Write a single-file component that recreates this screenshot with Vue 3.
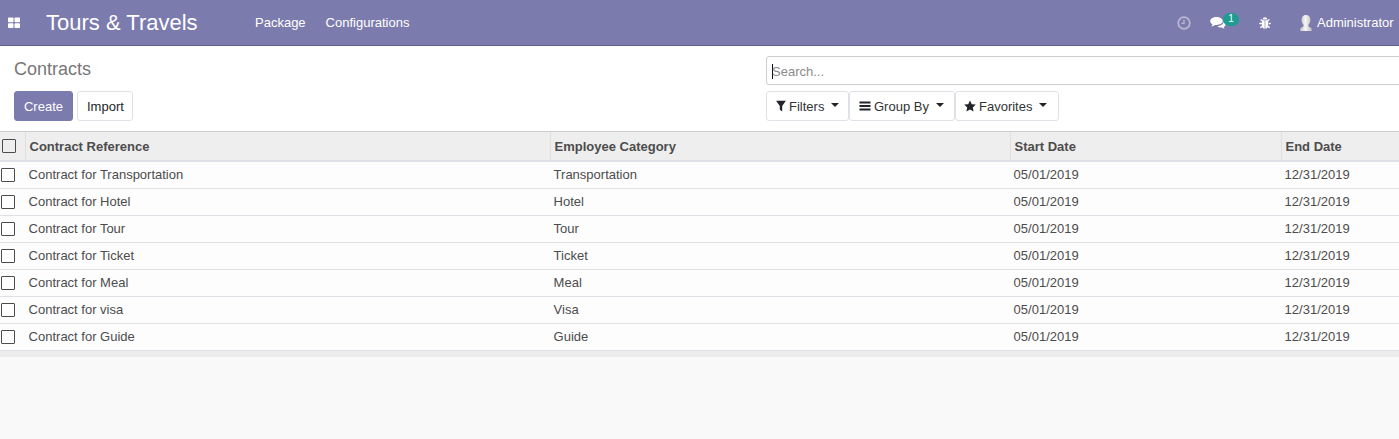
<script setup>
const rows = [
  ['Contract for Transportation', 'Transportation'],
  ['Contract for Hotel', 'Hotel'],
  ['Contract for Tour', 'Tour'],
  ['Contract for Ticket', 'Ticket'],
  ['Contract for Meal', 'Meal'],
  ['Contract for visa', 'Visa'],
  ['Contract for Guide', 'Guide'],
];
</script>

<template>
  <div class="page">
    <header class="navbar">
      <svg class="apps" width="12" height="12" viewBox="0 0 12 12">
        <rect x="0" y="0.5" width="5.5" height="4.8" rx="0.8" />
        <rect x="6.5" y="0.5" width="5.5" height="4.8" rx="0.8" />
        <rect x="0" y="6.2" width="5.5" height="4.8" rx="0.8" />
        <rect x="6.5" y="6.2" width="5.5" height="4.8" rx="0.8" />
      </svg>
      <span class="brand">Tours &amp; Travels</span>
      <nav class="menu">
        <a>Package</a>
        <a>Configurations</a>
      </nav>
      <div class="systray">
        <svg class="clock" width="14" height="14" viewBox="0 0 14 14" fill="none">
          <circle cx="7" cy="7" r="5.8" stroke-width="1.7" />
          <path d="M7 3.6V7.4H4.4" stroke-width="1.3" />
        </svg>
        <div class="chat">
          <svg width="16" height="14" viewBox="0 0 16 14">
            <path d="M6.500 1C3 1 .2 2.800.2 5.100c0 1.300.9 2.500 2.300 3.300-.2.800-.6 1.500-1.100 2 1.300-.2 2.500-.8 3.400-1.500.5.1 1.100.1 1.700.1 3.500 0 6.300-1.800 6.300-3.900S10 1 6.500 1Z" />
            <path d="M13.600 5.600c0 2.500-2.800 4.500-6.200 4.700.9.800 2.200 1.200 3.400 1.200.4 0 .8 0 1.200-.1.600.6 1.600 1.100 2.600 1.300-.4-.4-.7-1-.8-1.700 1-.6 1.700-1.500 1.700-2.500 0-1-.7-2-1.900-2.700Z" />
          </svg>
          <span class="badge">1</span>
        </div>
        <svg class="bug" width="12" height="12" viewBox="0.700 0.700 11.600 11.600">
          <path d="M4.200 3.100C4.300 1.800 5.300 1 6.500 1s2.200.8 2.300 2.100Z" />
          <path d="M3.500 3.900h2.700V12C4.500 11.800 3.500 10.500 3.500 8.800ZM6.800 3.900h2.700v4.900c0 1.700-1 3-2.700 3.200Z" />
          <path d="M2.300 3 3.500 4.300M10.700 3 9.500 4.300M1 7h2.500M10 7h2M2 11.200l1.700-1.500M11 11.200 9.300 9.700" />
        </svg>
        <div class="user">
          <svg width="12" height="16" viewBox="0 0 12 16">
            <defs>
              <linearGradient id="avatarShade" x1="0" y1="0" x2="1" y2="0">
                <stop offset="0" stop-color="#c4c4c4" />
                <stop offset="0.45" stop-color="#f6f6f6" />
                <stop offset="1" stop-color="#bdbdbd" />
              </linearGradient>
            </defs>
            <path fill="url(#avatarShade)" d="M6 0C3.300 0 1.600 1.900 1.600 4.800c0 2.200.9 4 1.900 5v1.600C2.300 12 .3 12.500.3 14v2h11.400v-2c0-1.500-2-2-3.200-2.600V9.800c1-1 1.900-2.800 1.900-5C10.400 1.900 8.700 0 6 0Z" />
          </svg>
          <span>Administrator</span>
          <i class="status"></i>
        </div>
      </div>
    </header>

    <section class="control-panel">
      <div class="left">
        <h1>Contracts</h1>
        <div class="buttons">
          <button class="btn primary">Create</button>
          <button class="btn import">Import</button>
        </div>
      </div>
      <div class="right">
        <div class="search">
          <i class="cursor"></i>
          <span>Search...</span>
        </div>
        <div class="filters">
          <button class="btn filter w-filters">
            <svg width="10" height="12" viewBox="0 0 10 12"><path d="M.1.800h9.800L6.200 6v5.600L3.800 9.800V6Z" /></svg>
            Filters
            <i class="caret"></i>
          </button>
          <button class="btn filter w-group">
            <svg width="12" height="12" viewBox="0 0 12 12"><path d="M.5 1.500h11v2H.5ZM.5 5h11v2H.5ZM.5 8.500h11v2H.5Z" /></svg>
            Group By
            <i class="caret"></i>
          </button>
          <button class="btn filter w-fav">
            <svg width="12" height="12" viewBox="0 0 13 12"><path d="M6.500 0 8.400 4l4.400.5-3.300 3 .9 4.400-3.900-2.200-3.900 2.200.9-4.400-3.300-3L4.600 4Z" /></svg>
            Favorites
            <i class="caret"></i>
          </button>
        </div>
      </div>
    </section>

    <table class="list">
      <colgroup>
        <col class="c0" />
        <col class="c1" />
        <col class="c2" />
        <col class="c3" />
        <col class="c4" />
      </colgroup>
      <thead>
        <tr>
          <th class="sel"><i class="check head"></i></th>
          <th>Contract Reference</th>
          <th>Employee Category</th>
          <th>Start Date</th>
          <th>End Date</th>
        </tr>
      </thead>
      <tbody>
        <tr v-for="row in rows" :key="row[0]">
          <td class="sel"><i class="check"></i></td>
          <td>{{ row[0] }}</td>
          <td>{{ row[1] }}</td>
          <td>05/01/2019</td>
          <td>12/31/2019</td>
        </tr>
      </tbody>
    </table>
    <div class="list-foot"></div>
  </div>
</template>

<style scoped>
.page {
  width: 1399px;
  height: 439px;
  overflow: hidden;
  background: #f9f9f9;
  font-family: "Liberation Sans", Arial, sans-serif;
  font-size: 13px;
  color: #4c4c4c;
}

.navbar {
  height: 45px;
  background: #7c7bad;
  border-bottom: 1px solid #5e5d8f;
  display: flex;
  align-items: center;
  color: #fff;
}

.apps {
  fill: #fff;
  margin-left: 8px;
}

.brand {
  font-size: 22px;
  margin-left: 26px;
  width: 209px;
  white-space: nowrap;
}

.menu {
  display: flex;
  gap: 20px;
}

.systray {
  margin-left: auto;
  display: flex;
  align-items: center;
  width: 222px;
  flex: none;
  white-space: nowrap;
}

.clock {
  stroke: #b9b8d3;
  flex: none;
}

.chat {
  display: flex;
  align-items: center;
  margin-left: 19px;
  position: relative;
  width: 30px;
  flex: none;
}

.chat svg {
  fill: #fff;
}

.badge {
  position: absolute;
  left: 13px;
  top: -3px;
  width: 16px;
  height: 13px;
  border-radius: 7px;
  background: #1d9d91;
  font-size: 10px;
  line-height: 12px;
  text-align: center;
}

.bug {
  fill: #fff;
  stroke: #fff;
  stroke-width: 0;
  margin-left: 19px;
  flex: none;
}

.bug path:last-child {
  stroke-width: 1.3;
  fill: none;
}

.user {
  display: flex;
  align-items: center;
  gap: 5px;
  margin-left: 29px;
  flex: none;
}

.status {
  width: 8px;
  height: 8px;
  border-radius: 50%;
  background: #a6c8e8;
  flex: none;
}

.control-panel {
  height: 85px;
  background: #fff;
  border-bottom: 1px solid #ccc;
  display: flex;
}

.left {
  width: 766px;
  flex: none;
  padding-left: 14px;
  box-sizing: border-box;
}

h1 {
  margin: 13px 0 0;
  font-size: 18px;
  font-weight: 400;
  line-height: 20px;
  color: #777;
}

.buttons {
  display: flex;
  gap: 4px;
  margin-top: 12px;
}

.btn {
  height: 30px;
  padding: 0 9px;
  border: 1px solid #dee2e6;
  border-radius: 3px;
  background: #fff;
  font: inherit;
  color: #212529;
  box-sizing: border-box;
}

.primary {
  width: 59px;
  padding: 0;
  background: #7c7bad;
  border-color: #7c7bad;
  color: #fff;
}

.import {
  padding: 0 8px 0 9px;
}

.right {
  flex: none;
  width: 700px;
}

.search {
  margin-top: 10px;
  height: 29px;
  box-sizing: border-box;
  border: 1px solid #ccc;
  border-radius: 3px;
  display: flex;
  align-items: center;
  padding: 1px 0 0 5px;
  color: #8a8a8a;
  background: #fff;
}

.cursor {
  width: 1px;
  height: 15px;
  background: #111;
  margin-right: -1px;
}

.filters {
  display: flex;
  margin-top: 6px;
}

.filter {
  display: flex;
  align-items: center;
  gap: 3px;
  padding: 0 0 0 9px;
  color: #333;
  white-space: nowrap;
}

.w-filters { width: 83px; }
.w-group { width: 106px; }
.w-fav { width: 104px; padding-left: 8px; }

.filter svg {
  fill: #212529;
  flex: none;
}

.caret {
  width: 0;
  height: 0;
  border: 4px solid transparent;
  border-top-color: #212529;
  border-bottom-width: 0;
  margin: 0 0 2px 4px;
}

.list {
  border-collapse: collapse;
  table-layout: fixed;
  width: 1560px;
  background: #fff;
}

.c0 { width: 25px; }
.c1 { width: 525px; }
.c2 { width: 460px; }
.c3 { width: 271px; }
.c4 { width: 279px; }

th {
  height: 29px;
  box-sizing: border-box;
  padding: 0 4px;
  background: #eee;
  border-bottom: 2px solid #dee2e6;
  border-left: 1px solid #dfdfdf;
  text-align: left;
  font-weight: 700;
  color: #4c4c4c;
}

th.sel {
  border-left: 0;
}

td {
  height: 27px;
  box-sizing: border-box;
  padding: 0 3px 1px 3.6px;
  background: #fdfdfd;
  border-bottom: 1px solid #dee2e6;
}

.sel {
  padding: 0;
}

.check {
  display: block;
  box-sizing: border-box;
  width: 14px;
  height: 14px;
  margin-left: 1px;
  border: 1px solid #4c4c4c;
  background: #fff;
  border-radius: 1px;
}

.check.head {
  margin-left: 2px;
  background: transparent;
}

.list-foot {
  height: 6px;
  background: #ececec;
}
</style>
